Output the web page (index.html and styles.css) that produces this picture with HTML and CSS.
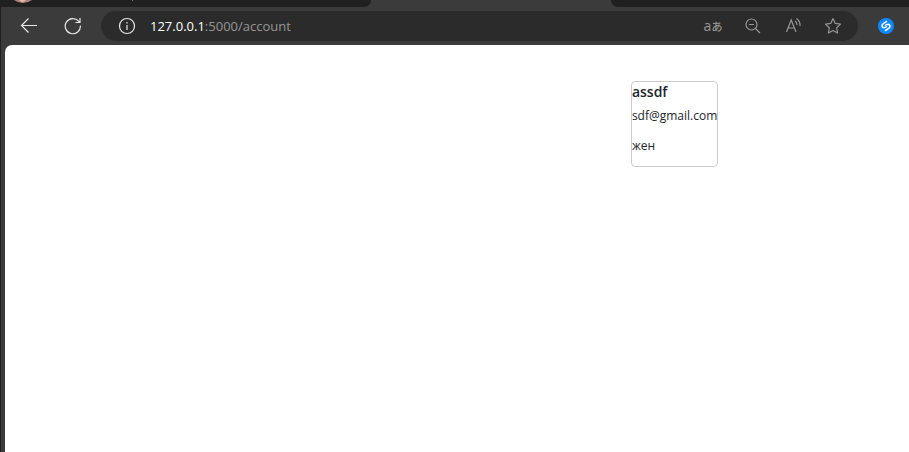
FILE: index.html
```
<!DOCTYPE html>
<html lang="en">
<head>
<meta charset="utf-8">
<title>Account</title>
<link rel="stylesheet" href="styles.css">
</head>
<body>
<div class="window">
  <header>
    <div class="tabs">
      <div class="tab tab-left">
        <svg class="avatar" width="18" height="3" viewBox="0 0 18 3" aria-hidden="true"><path d="M0 0H18Q14 3 9 3T0 0Z" fill="#a98278"/><path d="M5 0H12L10 2H7Z" fill="#dfb5a8"/></svg>
        <span class="mark"></span>
      </div>
      <div class="tab-active"></div>
      <div class="tab tab-right"></div>
    </div>
    <div class="toolbar">
      <button class="icon" type="button" aria-label="Back">
        <svg width="18" height="18" viewBox="0 0 18 18"><path d="M17 8.500H1.500M8.500 1.500L1.500 8.500L8.500 15.500" /></svg>
      </button>
      <button class="icon" type="button" aria-label="Refresh">
        <svg width="18" height="18" viewBox="0 0 18 18"><path d="M16.400 8.600A7.600 7.600 0 1 1 14.600 4.200L16 5.500M16 1V5.500H11.500"/></svg>
      </button>
      <div class="address">
        <button class="icon" type="button" aria-label="Site information">
          <svg width="18" height="18" viewBox="0 0 18 18"><circle cx="9" cy="9" r="7.500"/><path d="M9 8V13M9 5V6.500"/></svg>
        </button>
        <a class="url" href="#"><span class="host">127.0.0.1</span>:5000/account</a>
        <div class="actions">
          <button class="icon translate" type="button" aria-label="Translate"><span class="latin">a</span><span class="kana">あ</span></button>
          <button class="icon" type="button" aria-label="Zoom out">
            <svg width="18" height="18" viewBox="0 0 18 18"><circle cx="7.500" cy="7.500" r="5.500"/><path d="M5 7.500H10M11.500 11.500L16 16"/></svg>
          </button>
          <button class="icon" type="button" aria-label="Read aloud">
            <svg width="18" height="18" viewBox="0 0 18 18"><path d="M2.500 15L7.200 3L12 15M4.200 11H10.300M11 4Q13 5.500 13 8M12.500 1.500Q16.500 4.500 16 9"/></svg>
          </button>
          <button class="icon" type="button" aria-label="Favourite">
            <svg width="18" height="18" viewBox="0 0 18 18"><path d="M9 1.600L11.300 6.400L16.500 7.100L12.700 10.800L13.600 16L9 13.500L4.400 16L5.300 10.800L1.500 7.100L6.700 6.400Z" stroke-linejoin="round"/></svg>
          </button>
        </div>
      </div>
      <button class="icon extension" type="button" aria-label="Shazam">
        <svg width="16" height="16" viewBox="0 0 16 16"><circle cx="8" cy="8" r="8"/><path d="M8.500 3.500L5.400 5.500Q3.300 7 4.300 8.800Q5.400 10.300 7.200 9.400L8.600 8.700M7.500 12.500L10.600 10.500Q12.700 9 11.700 7.200Q10.600 5.700 8.800 6.600L7.400 7.300"/></svg>
      </button>
    </div>
  </header>
  <main>
    <article class="card">
      <h1>assdf</h1>
      <p>sdf@gmail.com</p>
      <p>жен</p>
    </article>
  </main>
</div>
</body>
</html>
```
FILE: styles.css
```
* {
  box-sizing: border-box;
}

body {
  margin: 0;
  font-family: "Open Sans", "Noto Sans", "Noto Sans CJK JP", sans-serif;
}

.window {
  display: flex;
  flex-direction: column;
  min-height: 100vh;
  background: #3b3b3b;
  border-left: 1px solid #202020;
}

.tabs {
  display: flex;
  height: 7px;
}

.tab {
  display: flex;
  background: #202020;
}

.tab-left {
  flex: 370;
  border-bottom-right-radius: 7px;
}

.tab-active {
  flex: 240;
}

.tab-right {
  flex: 298;
  border-bottom-left-radius: 7px;
}

.avatar {
  margin-left: 13px;
}

.mark {
  width: 1px;
  height: 1px;
  margin-left: 100px;
  background: #777;
}

.toolbar {
  display: flex;
  align-items: center;
  height: 38px;
  padding: 0 14px 0 19px;
}

.icon {
  display: flex;
  align-items: center;
  justify-content: center;
  width: 18px;
  height: 18px;
  flex: none;
  padding: 0;
  border: 0;
  background: none;
  color: #e8e8e8;
  font-family: inherit;
}

.icon svg {
  fill: none;
  stroke: currentColor;
  stroke-width: 1.2;
}

.toolbar > .icon + .icon {
  margin-left: 26px;
}

.address {
  display: flex;
  align-items: center;
  flex: 1;
  height: 30px;
  margin: 0 19px;
  padding: 0 16px 0 17px;
  border-radius: 15px;
  background: #2b2b2b;
}

.url {
  margin-left: 14px;
  font-size: 13px;
  line-height: 20px;
  color: #969696;
  text-decoration: none;
}

.host {
  color: #fff;
}

.actions {
  display: flex;
  gap: 22px;
  margin-left: auto;
}

.actions .icon {
  color: #969696;
}

.translate {
  align-items: baseline;
  line-height: 18px;
}

.latin {
  font-size: 14px;
}

.kana {
  font-size: 11px;
  font-weight: 500;
}

.extension circle {
  fill: #0d88ff;
  stroke: none;
}

.extension path {
  stroke: #fff;
  stroke-width: 1.5;
  stroke-linecap: round;
}

main {
  flex: 1;
  margin-left: 4px;
  padding: 36px 21% 36px 0;
  border-top-left-radius: 7px;
  background: #fff;
}

.card {
  width: fit-content;
  margin-left: auto;
  padding-bottom: 11px;
  border: 1px solid #ccc;
  border-radius: 4px;
  color: #212529;
}

h1 {
  margin: 0 0 5px;
  font-size: 14px;
  line-height: 20px;
  font-weight: 600;
}

p {
  margin: 0;
  font-size: 12px;
  line-height: 18px;
}

p + p {
  margin-top: 12px;
}
```
